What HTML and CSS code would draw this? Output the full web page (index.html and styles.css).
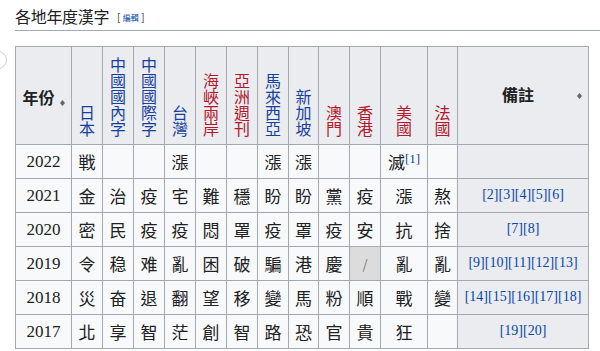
FILE: index.html
```html
<!DOCTYPE html>
<html lang="zh-Hant">
<head>
<meta charset="utf-8">
<title>各地年度漢字</title>
<link rel="stylesheet" href="styles.css">
</head>
<body>
<div class="edge-circle"></div>
<div class="page">
  <h2 class="heading"><span class="heading-text">各地年度漢字</span><span class="edit">[ <a>編輯</a> ]</span></h2>
  <table class="wikitable">
    <colgroup>
      <col class="c-year"><col class="c-n"><col class="c-n"><col class="c-n"><col class="c-n"><col class="c-n"><col class="c-n"><col class="c-n"><col class="c-n30"><col class="c-n"><col class="c-n"><col class="c-us"><col class="c-n30"><col class="c-note">
    </colgroup>
    <thead>
      <tr class="head-row">
        <th class="sort mid"><span class="hl">年份</span><span class="arrows"><svg width="5" height="6" viewBox="0 0 5 6"><path d="M2.5 0 L5 3 L2.5 6 L0 3 Z" fill="#666"/></svg></span></th>
        <th class="v blue">日<br>本</th>
        <th class="v blue">中<br>國<br>國<br>內<br>字</th>
        <th class="v blue">中<br>國<br>國<br>際<br>字</th>
        <th class="v blue">台<br>灣</th>
        <th class="v red">海<br>峽<br>兩<br>岸</th>
        <th class="v red">亞<br>洲<br>週<br>刊</th>
        <th class="v blue">馬<br>來<br>西<br>亞</th>
        <th class="v blue">新<br>加<br>坡</th>
        <th class="v red">澳<br>門</th>
        <th class="v red">香<br>港</th>
        <th class="v red">美<br>國</th>
        <th class="v red">法<br>國</th>
        <th class="sort mid note-h"><span class="hl">備註</span><span class="arrows"><svg width="5" height="6" viewBox="0 0 5 6"><path d="M2.5 0 L5 3 L2.5 6 L0 3 Z" fill="#666"/></svg></span></th>
      </tr>
    </thead>
    <tbody>
      <tr>
        <td class="yr">2022</td><td>戦</td><td></td><td></td><td>漲</td><td></td><td></td><td>漲</td><td>漲</td><td></td><td></td><td>滅<sup class="ref">[1]</sup></td><td></td><td class="note"></td>
      </tr>
      <tr>
        <td class="yr">2021</td><td>金</td><td>治</td><td>疫</td><td>宅</td><td>難</td><td>穩</td><td>盼</td><td>盼</td><td>黨</td><td>疫</td><td>漲</td><td>熬</td><td class="note"><span class="refs">[2][3][4][5][6]</span></td>
      </tr>
      <tr>
        <td class="yr">2020</td><td>密</td><td>民</td><td>疫</td><td>疫</td><td>悶</td><td>罩</td><td>疫</td><td>罩</td><td>疫</td><td>安</td><td>抗</td><td>捨</td><td class="note"><span class="refs">[7][8]</span></td>
      </tr>
      <tr>
        <td class="yr">2019</td><td>令</td><td>稳</td><td>难</td><td>亂</td><td>困</td><td>破</td><td>騙</td><td>港</td><td>慶</td><td class="na">/</td><td>亂</td><td>亂</td><td class="note"><span class="refs">[9][10][11][12][13]</span></td>
      </tr>
      <tr>
        <td class="yr">2018</td><td>災</td><td>奋</td><td>退</td><td>翻</td><td>望</td><td>移</td><td>變</td><td>馬</td><td>粉</td><td>順</td><td>戰</td><td>變</td><td class="note"><span class="refs">[14][15][16][17][18]</span></td>
      </tr>
      <tr>
        <td class="yr">2017</td><td>北</td><td>享</td><td>智</td><td>茫</td><td>創</td><td>智</td><td>路</td><td>恐</td><td>官</td><td>貴</td><td>狂</td><td></td><td class="note"><span class="refs">[19][20]</span></td>
      </tr>
    </tbody>
  </table>
</div>
</body>
</html>
```
FILE: styles.css
```css
html, body {
  margin: 0;
  padding: 0;
  background: #ffffff;
}
body {
  color: #202122;
  font-family: "Noto Sans CJK TC", "Noto Sans", sans-serif;
  overflow: hidden;
}
.edge-circle {
  position: absolute;
  left: -11px;
  top: 51px;
  width: 16px;
  height: 16px;
  border: 1px solid #c8ccd1;
  border-radius: 50%;
}
.page {
  padding: 0 0 0 15px;
}
.heading {
  margin: 0;
  padding: 5px 0 2px 0;
  line-height: 21px;
  font-size: 16px;
  font-weight: normal;
  border-bottom: 1px solid #a2a9b1;
  display: flex;
  align-items: center;
}
.heading-text {
  letter-spacing: -0.3px;
}
.edit {
  margin-left: 8px;
  font-size: 10px;
  color: #54595d;
  font-family: "Liberation Sans", "Noto Sans CJK TC", sans-serif;
  padding-top: 2px;
}
.edit a {
  color: #0645ad;
  font-size: 8px;
  font-family: "Noto Sans CJK TC", sans-serif;
}
.wikitable {
  margin-top: 15px;
  border-collapse: collapse;
  table-layout: fixed;
  width: 574px;
  background: #f8f9fa;
  border: 1px solid #a2a9b1;
}
.c-year { width: 56px; }
.c-n { width: 31px; }
.c-n30 { width: 30px; }
.c-us { width: 47px; }
.c-note { width: 131px; }
.wikitable th,
.wikitable td {
  border: 1px solid #a2a9b1;
  padding: 0;
  text-align: center;
}
.head-row {
  height: 98px;
}
.wikitable th {
  background: #eaecf0;
  font-family: "Noto Sans CJK TC", sans-serif;
}
.wikitable th.v {
  vertical-align: bottom;
  font-weight: normal;
  font-size: 16px;
  line-height: 16px;
  padding-bottom: 8px;
}
.blue { color: #173f9e; }
.red { color: #b3182b; }
.wikitable th.mid {
  vertical-align: middle;
  position: relative;
  font-size: 16px;
  font-weight: bold;
  line-height: 20px;
}
.wikitable th.sort {
  padding-right: 10px;
}
.hl {
  position: relative;
  top: 1px;
}
.note-h .hl {
  top: -2px;
}
.arrows {
  position: absolute;
  right: 6px;
  top: 52px;
  line-height: 0;
}
.note-h .arrows {
  top: 45px;
  right: 6px;
}
.wikitable tbody tr {
  height: 34px;
}
.wikitable td {
  font-family: "Noto Sans CJK TC", sans-serif;
  font-size: 17px;
  line-height: 20px;
  vertical-align: middle;
  color: #202122;
}
.wikitable td.yr {
  font-family: "Liberation Serif", serif;
  font-size: 17px;
}
.wikitable td.na {
  background: #dcdcdc;
  color: #72777d;
  font-size: 13px;
}
.wikitable td.note {
  background: #eaecf0;
  vertical-align: top;
  padding-top: 3px;
}
.refs {
  font-family: "Liberation Serif", serif;
  font-size: 14px;
  line-height: 16px;
  color: #0645ad;
  white-space: nowrap;
}
.ref {
  font-family: "Liberation Serif", serif;
  font-size: 13px;
  line-height: 0;
  color: #0645ad;
  vertical-align: 6px;
}
```
